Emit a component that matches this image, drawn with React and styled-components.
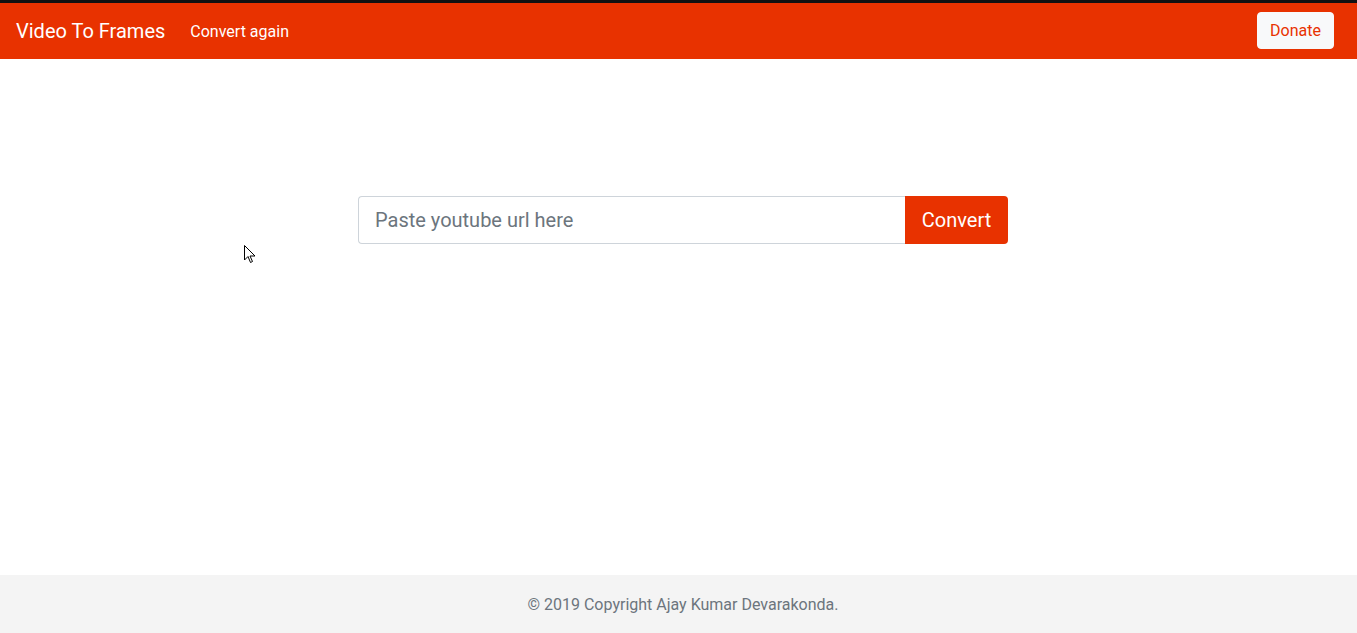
import React from "react";
import styled, { createGlobalStyle } from "styled-components";

const red = "#e83200";

const Global = createGlobalStyle`
  html, body { margin: 0; padding: 0; }
  body {
    font-family: Roboto, "Liberation Sans", Arial, sans-serif;
    font-size: 16px;
    color: #212529;
    background: #fff;
  }
  * { box-sizing: border-box; }
`;

const Page = styled.div`
  min-height: 100vh;
  display: flex;
  flex-direction: column;
  border-top: 3px solid #111;
  position: relative;
`;

const Navbar = styled.nav`
  height: 56px;
  background: ${red};
  display: flex;
  align-items: center;
  padding: 0 23px 0 16px;
`;

const Brand = styled.a`
  color: #fff;
  font-size: 20px;
  line-height: 30px;
  margin-right: 17px;
  text-decoration: none;
`;

const NavLink = styled.a`
  color: #fff;
  font-size: 16px;
  padding: 8px;
  text-decoration: none;
`;

const Spacer = styled.div`
  flex: 1;
`;

const DonateButton = styled.button`
  width: 77px;
  height: 37px;
  padding: 0;
  border: 1px solid #f8f9fa;
  border-radius: 4px;
  background: #f8f9fa;
  color: ${red};
  font-family: inherit;
  font-size: 16px;
  margin-top: -1px;
`;

const Main = styled.main`
  flex: 1;
  display: flex;
  justify-content: center;
  padding: 137px 0 0 9px;
`;

const InputGroup = styled.div`
  display: flex;
  width: 650px;
  height: 48px;
`;

const UrlInput = styled.input`
  flex: 1;
  height: 48px;
  border: 1px solid #ced4da;
  border-right: none;
  border-radius: 4px 0 0 4px;
  padding: 0 16px;
  font-family: inherit;
  font-size: 20px;
  color: #495057;
  outline: none;
  &::placeholder { color: #6c757d; }
`;

const ConvertButton = styled.button`
  width: 103px;
  height: 48px;
  border: none;
  border-radius: 0 4px 4px 0;
  background: ${red};
  color: #fff;
  font-family: inherit;
  font-size: 20px;
`;

const Footer = styled.footer`
  height: 58px;
  background: #f4f4f4;
  display: flex;
  align-items: center;
  justify-content: center;
  padding-left: 9px;
  color: #6c757d;
  font-size: 16px;
`;

const Cursor = styled.svg`
  position: absolute;
  left: 244px;
  top: 242px;
  pointer-events: none;
`;

export default function App() {
  return (
    <>
      <Global />
      <Page>
        <Navbar>
          <Brand href="#">Video To Frames</Brand>
          <NavLink href="#">Convert again</NavLink>
          <Spacer />
          <DonateButton>Donate</DonateButton>
        </Navbar>
        <Main>
          <InputGroup>
            <UrlInput placeholder="Paste youtube url here" />
            <ConvertButton>Convert</ConvertButton>
          </InputGroup>
        </Main>
        <Footer>© 2019 Copyright Ajay Kumar Devarakonda.</Footer>
        <Cursor width="13" height="20" viewBox="0 0 13 20">
          <path d="M0.5 0.5 L0.5 15 L4 11.5 L6.5 17.5 L8.5 16.5 L6 11 L11 11 Z" fill="#fff" stroke="#000" strokeWidth="1" />
        </Cursor>
      </Page>
    </>
  );
}
